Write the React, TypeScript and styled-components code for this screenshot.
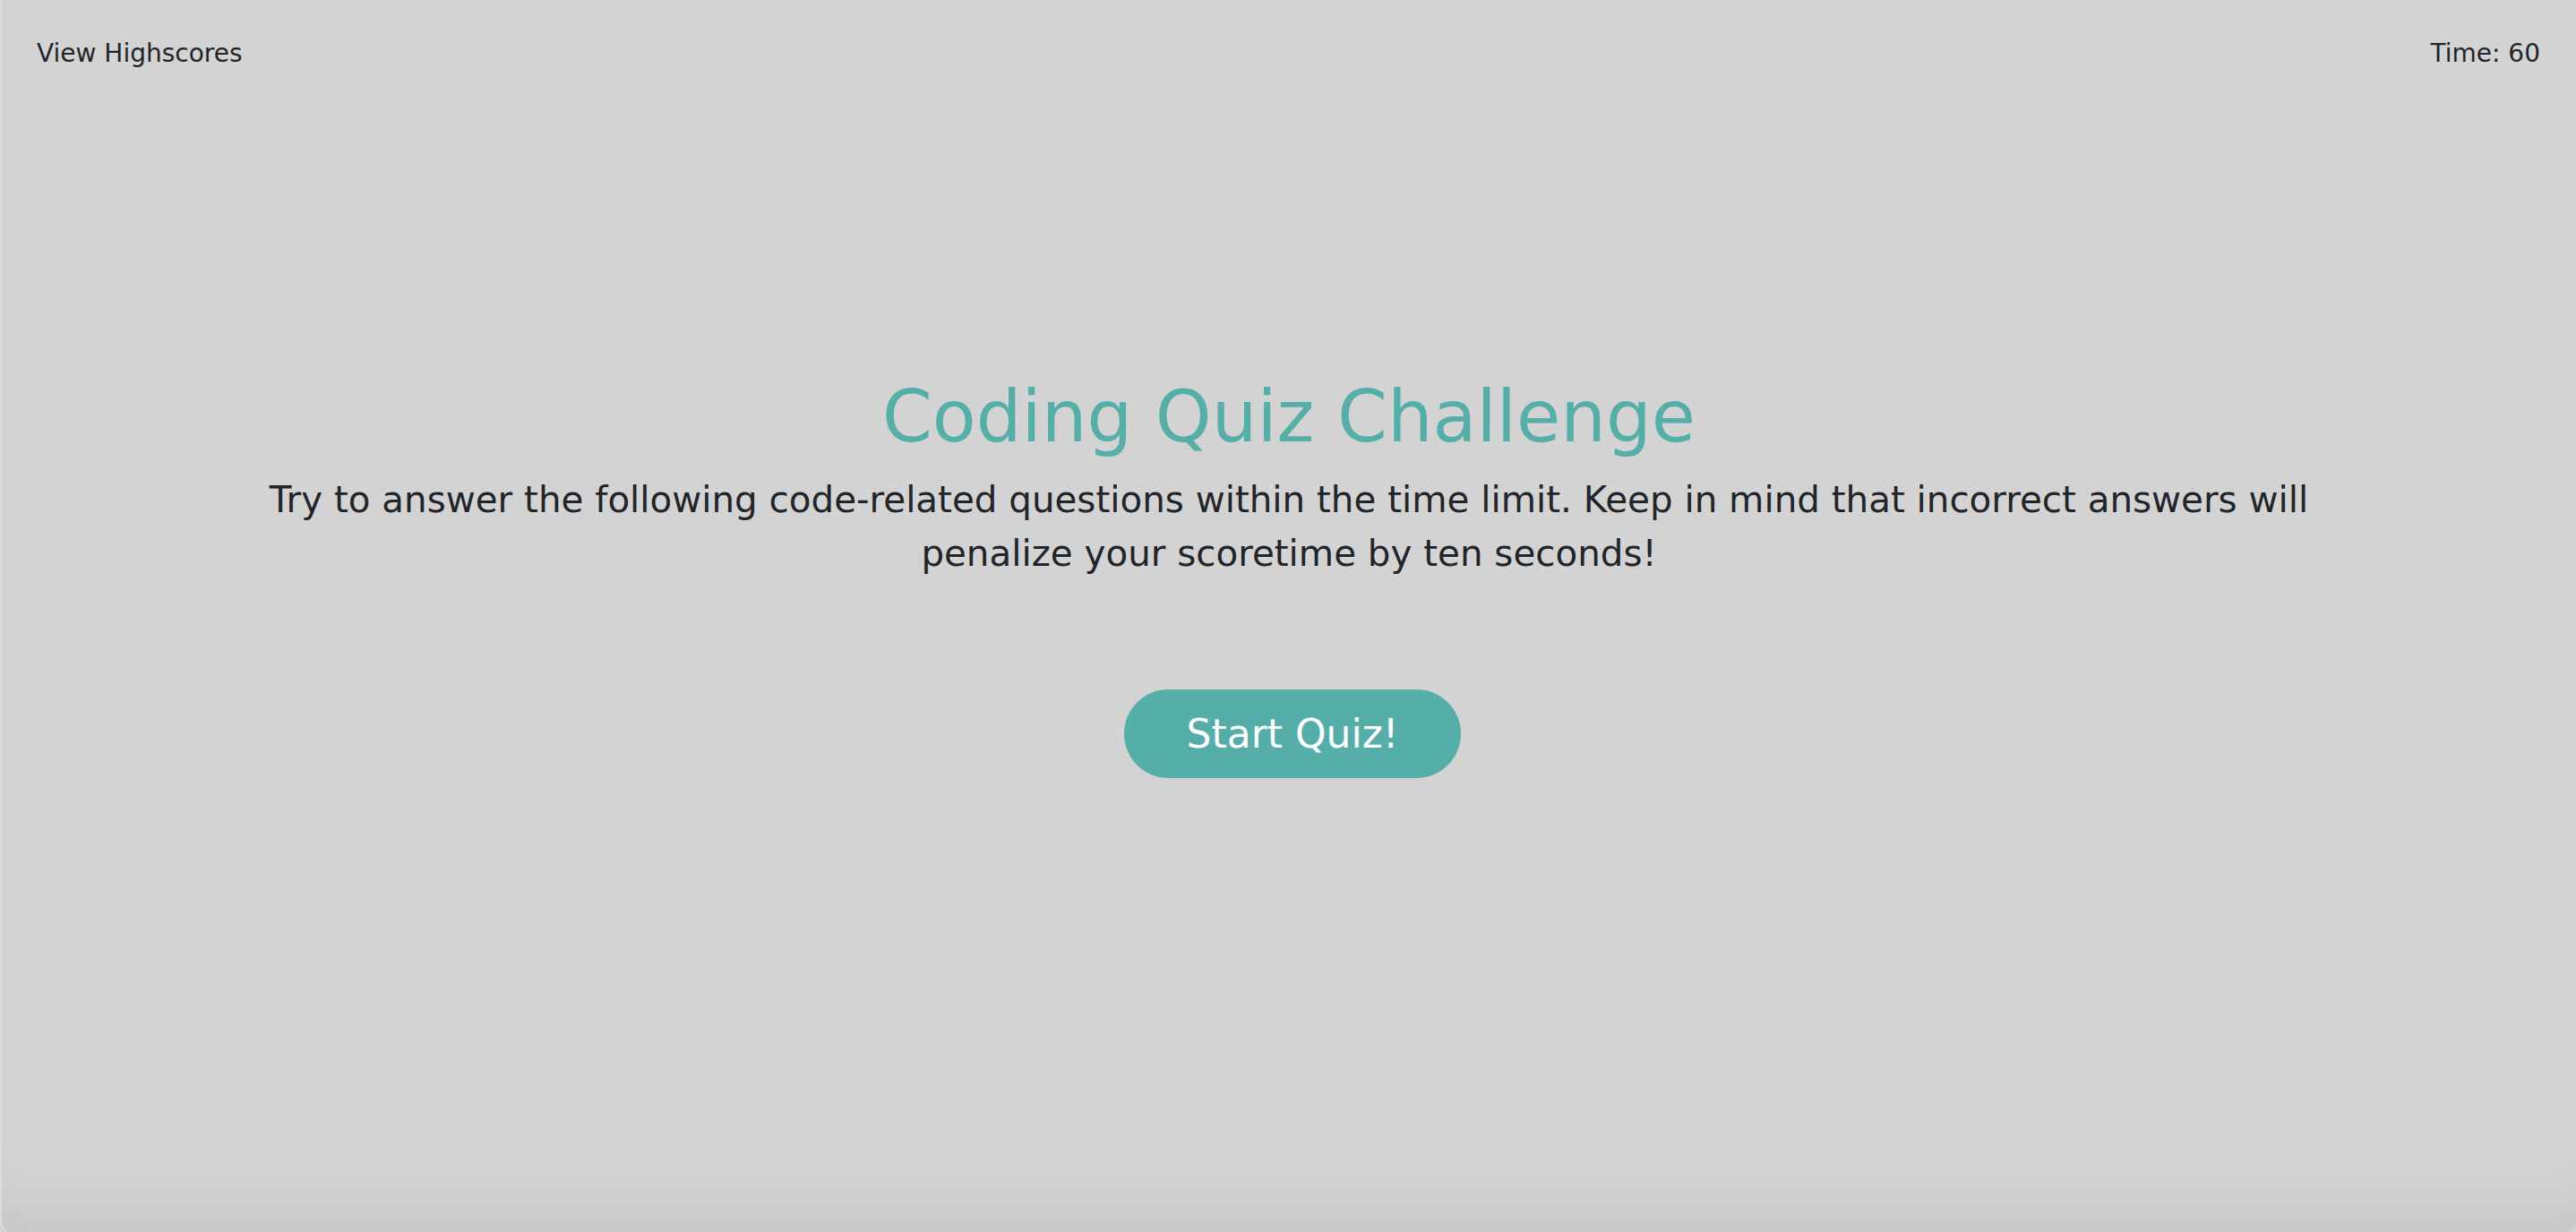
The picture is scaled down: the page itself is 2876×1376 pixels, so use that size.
import React from "react";
import styled, { createGlobalStyle } from "styled-components";

const GlobalStyle = createGlobalStyle`
  html, body {
    margin: 0;
    padding: 0;
    background: #d3d3d3;
    overflow: hidden;
  }
  body {
    font-family: "DejaVu Sans", Verdana, sans-serif;
    color: #212529;
  }
`;

const Page = styled.div`
  box-sizing: border-box;
  height: 100vh;
  overflow: hidden;
  display: flex;
  flex-direction: column;
  background: #d3d3d3;
  border-left: 2px solid #dcdcdc;
  box-shadow: inset 0 -70px 70px -50px rgba(0, 0, 0, 0.07);
  border-bottom-left-radius: 12px;
  border-bottom-right-radius: 12px;
`;

const Header = styled.header`
  display: flex;
  justify-content: space-between;
  align-items: baseline;
  padding: 43px 40px 0 39px;
  font-size: 28px;
  line-height: normal;
`;

const HeaderLink = styled.a`
  color: #212529;
  text-decoration: none;
  cursor: pointer;
`;

const Timer = styled.span`
  color: #212529;
`;

const Main = styled.main`
  display: flex;
  flex-direction: column;
  align-items: center;
  padding-top: 343px;
`;

const Title = styled.h1`
  margin: 0;
  font-size: 80px;
  font-weight: 400;
  line-height: normal;
  color: #55afa8;
  text-align: center;
`;

const Intro = styled.p`
  margin: 16px 0 0;
  width: 2330px;
  font-size: 40.4px;
  line-height: 60px;
  text-align: center;
  color: #212529;
`;

const StartButton = styled.button`
  margin-top: 122px;
  margin-left: 8px;
  padding: 24px 70px;
  border: none;
  border-radius: 50px;
  background: #55afa8;
  color: #ffffff;
  font-family: "DejaVu Sans", Verdana, sans-serif;
  font-size: 44px;
  line-height: normal;
  cursor: pointer;
`;

export default function App() {
  return (
    <>
      <GlobalStyle />
      <Page>
        <Header>
          <HeaderLink>View Highscores</HeaderLink>
          <Timer>Time: 60</Timer>
        </Header>
        <Main>
          <Title>Coding Quiz Challenge</Title>
          <Intro>
            Try to answer the following code-related questions within the time
            limit. Keep in mind that incorrect answers will penalize your
            scoretime by ten seconds!
          </Intro>
          <StartButton>Start Quiz!</StartButton>
        </Main>
      </Page>
    </>
  );
}
